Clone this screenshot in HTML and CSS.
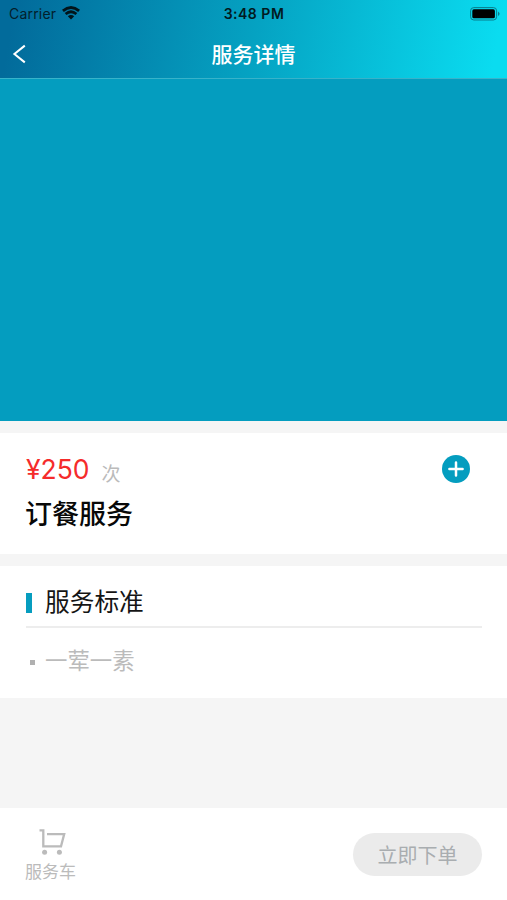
FILE: index.html
```html
<!DOCTYPE html>
<html lang="zh-CN">
<head>
<meta charset="utf-8">
<title>服务详情</title>
<link rel="stylesheet" href="styles.css">
</head>
<body>
<header class="header">
  <div class="status">
    <div class="carrier"><span>Carrier</span>
      <svg class="wifi" width="18" height="14" viewBox="0 0 18 14" fill="none" stroke="#02141a"><path d="M.9 4.8Q9 -1.8 17.1 4.8" stroke-width="2.9"/><path d="M3.6 8Q9 3.5 14.4 8" stroke-width="2.7"/><path d="M9 13.4L5.8 10.2Q9 7.6 12.2 10.2Z" fill="#02141a" stroke="none"/></svg>
    </div>
    <div class="time">3:48 PM</div>
    <svg class="battery" width="30" height="14" viewBox="0 0 30 14"><rect x=".6" y=".6" width="26" height="12.4" rx="3.2" fill="none" stroke="#087c8b"/><rect x="2.3" y="2.3" width="22.6" height="9" rx="1.6" fill="#000"/><path d="M28 4.5Q31.2 6.8 28 9.1Z" fill="#087c8b"/></svg>
  </div>
  <div class="nav">
    <svg class="back" width="14" height="20" viewBox="0 0 14 20" fill="none" stroke="#fff" stroke-width="2"><path d="M12.8 1.6L2.4 10L12.8 18.4"/></svg>
    <h1 class="title">服务详情</h1>
  </div>
</header>
<div class="hero"></div>
<section class="card product">
  <div class="price-row">
    <span class="price">¥250</span><span class="unit">次</span>
    <svg class="add" width="28" height="28" viewBox="0 0 28 28"><circle cx="14" cy="14" r="14" fill="#049dbf"/><path d="M7.4 14H20.6M14 7.4V20.6" stroke="#fff" stroke-width="2.5" stroke-linecap="round"/></svg>
  </div>
  <h2 class="name">订餐服务</h2>
</section>
<section class="card standard">
  <h3 class="heading">服务标准</h3>
  <div class="item">一荤一素</div>
</section>
<footer class="footer">
  <div class="cart">
    <svg width="27" height="28" viewBox="0 0 27 28" fill="none" stroke="#bbb" stroke-width="2.3"><path d="M.5 2.3H4.3V18.4H22L25.2 6.1H8"/><circle cx="5.6" cy="24.2" r="2.5" fill="#bbb" stroke="none"/><circle cx="20.4" cy="24.2" r="2.5" fill="#bbb" stroke="none"/></svg>
    <span>服务车</span>
  </div>
  <div class="order">立即下单</div>
</footer>
</body>
</html>
```

FILE: styles.css
```css
* { box-sizing: border-box; }
body {
  margin: 0;
  height: 900px;
  display: flex;
  flex-direction: column;
  background: #f5f5f5;
  font-family: Inter, "Noto Sans CJK SC", sans-serif;
  overflow: hidden;
}
h1, h2, h3 { margin: 0; }
.header {
  height: 79px;
  flex: none;
  background: linear-gradient(100deg, #026b9b 3%, #05a2c2 50%, #0adcf0 97%);
  border-bottom: 1px solid #38b3ca;
}
.status {
  height: 28px;
  display: grid;
  grid-template-columns: 1fr auto 1fr;
  align-items: center;
  padding: 0 7px 0 9px;
  font-size: 14px;
  line-height: 28px;
  color: #02202c;
}
.carrier { display: flex; align-items: center; gap: 6px; letter-spacing: .2px; }
.wifi { margin-top: -2px; }
.time { font-weight: 600; color: #021a20; letter-spacing: .5px; margin-left: -1px; }
.battery { justify-self: end; margin-top: -1px; }
.nav {
  height: 50px;
  display: grid;
  grid-template-columns: 1fr auto 1fr;
  align-items: center;
  padding: 1px 12px 0;
}
.title { font-size: 21px; line-height: 48px; font-weight: 500; color: #fff; padding-top: 2px; }
.hero { height: 342px; flex: none; background: #049dbf; }
.card { background: #fff; margin-top: 12px; padding: 0 25px; flex: none; }
.product { height: 121px; padding-top: 18px; }
.price-row { display: flex; height: 36px; align-items: center; padding-right: 12px; }
.price { font-size: 26.5px; color: #f52b2b; margin-left: 1px; }
.unit { font-size: 19px; color: #bbb; margin: 7px 0 0 12px; }
.add { margin-left: auto; }
.name { font-size: 27px; line-height: 40px; margin-top: 8px; font-weight: 500; color: #080808; }
.standard { height: 132px; }
.heading {
  height: 62px;
  display: flex;
  align-items: center;
  border-bottom: 2px solid #ededed;
  font-size: 24.7px;
  line-height: 36px;
  font-weight: 400;
  color: #151515;
  padding-top: 12px;
  margin-left: 1px;
}
.heading::before { content: ""; width: 6px; height: 20px; background: #069dbf; margin-right: 13px; margin-top: 2px; }
.item {
  display: flex;
  align-items: center;
  padding: 16px 0 0 5px;
  font-size: 22.4px;
  line-height: 34px;
  color: #bbb;
}
.item::before { content: ""; width: 5px; height: 5px; background: #b0b0b0; margin-right: 10px; margin-top: 3px; }
.footer {
  height: 92px;
  margin-top: auto;
  flex: none;
  display: flex;
  justify-content: space-between;
  background: #fff;
  padding: 0 25px;
}
.cart {
  display: flex;
  flex-direction: column;
  align-items: center;
  padding-top: 20px;
  font-size: 17px;
  line-height: 26px;
  color: #bbb;
}
.cart svg { margin-left: 3px; }
.cart span { margin-top: 3px; }
.order {
  margin-top: 25px;
  width: 129px;
  height: 43px;
  padding-top: 1px;
  border-radius: 22px;
  background: #ebebeb;
  color: #a9adb0;
  font-size: 20px;
  line-height: 44px;
  text-align: center;
}
```
